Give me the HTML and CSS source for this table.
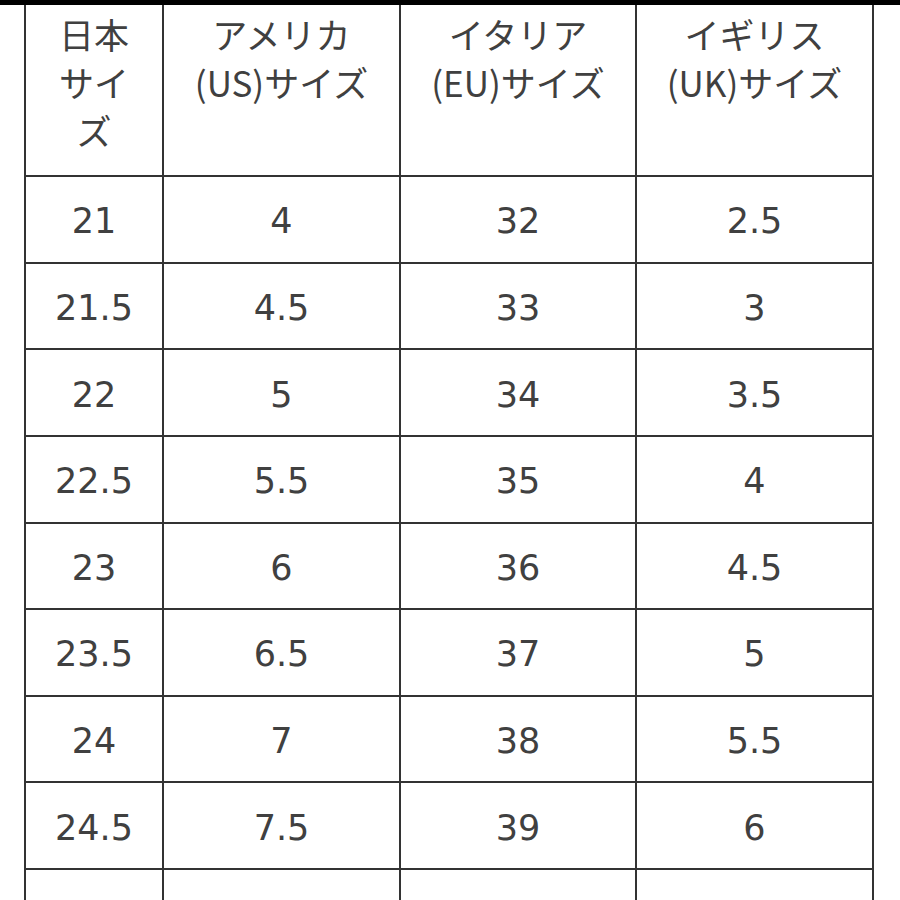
FILE: index.html
```html
<!DOCTYPE html>
<html lang="ja">
<head>
<meta charset="utf-8">
<link rel="stylesheet" href="styles.css">
</head>
<body>
<div class="topbar"></div>
<div class="chart">
  <div class="cell head">日本<br>サイ<br>ズ</div>
  <div class="cell head">アメリカ<br>(US)サイズ</div>
  <div class="cell head">イタリア<br>(EU)サイズ</div>
  <div class="cell head">イギリス<br>(UK)サイズ</div>

  <div class="cell">21</div><div class="cell">4</div><div class="cell">32</div><div class="cell">2.5</div>
  <div class="cell">21.5</div><div class="cell">4.5</div><div class="cell">33</div><div class="cell">3</div>
  <div class="cell">22</div><div class="cell">5</div><div class="cell">34</div><div class="cell">3.5</div>
  <div class="cell">22.5</div><div class="cell">5.5</div><div class="cell">35</div><div class="cell">4</div>
  <div class="cell">23</div><div class="cell">6</div><div class="cell">36</div><div class="cell">4.5</div>
  <div class="cell">23.5</div><div class="cell">6.5</div><div class="cell">37</div><div class="cell">5</div>
  <div class="cell">24</div><div class="cell">7</div><div class="cell">38</div><div class="cell">5.5</div>
  <div class="cell">24.5</div><div class="cell">7.5</div><div class="cell">39</div><div class="cell">6</div>
  <div class="cell">25</div><div class="cell">8</div><div class="cell">40</div><div class="cell">6.5</div>
</div>
</body>
</html>
```
FILE: styles.css
```css
html, body {
  margin: 0;
  padding: 0;
  background: #ffffff;
  overflow: hidden;
  height: 900px;
}
body {
  font-family: "Noto Sans CJK JP", "Noto Sans", sans-serif;
  color: #404040;
}
.topbar {
  height: 5px;
  background: #000000;
}
.chart {
  margin-left: 24px;
  width: 850px;
  display: grid;
  grid-template-columns: 136px 235px 234px 235px;
  grid-template-rows: 170px repeat(9, 84.625px);
  gap: 2px;
  padding: 0 2px 2px 2px;
  box-sizing: border-box;
  background: #333333;
}
.cell {
  background: #ffffff;
  display: flex;
  align-items: center;
  justify-content: center;
  padding-top: 5px;
  font-family: "DejaVu Sans", "Noto Sans CJK JP", sans-serif;
  font-size: 35px;
  line-height: 1;
}
.head {
  display: block;
  text-align: center;
  font-family: "Noto Sans CJK JP", "Noto Sans", sans-serif;
  line-height: 48px;
  padding-top: 5px;
}
```
